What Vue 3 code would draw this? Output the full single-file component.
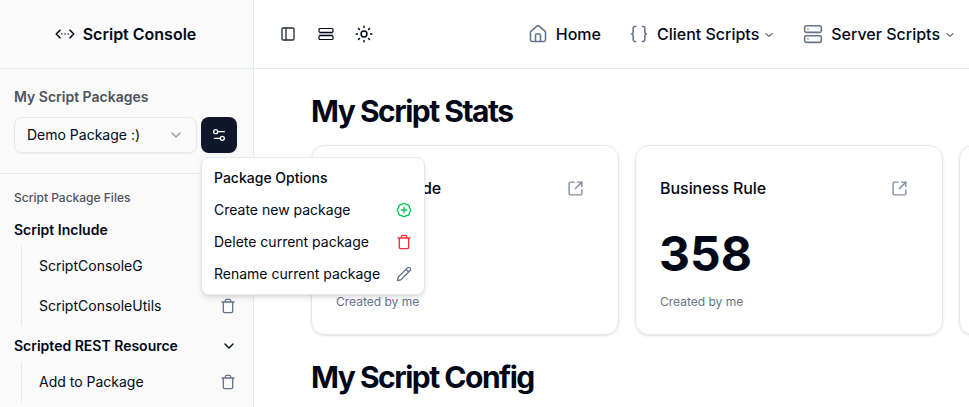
<script setup>
const files = [
  { title: 'Script Include', items: ['ScriptConsoleG', 'ScriptConsoleUtils'] },
  { title: 'Scripted REST Resource', items: ['Add to Package'] },
]
const stats = [
  { title: 'Script Include', value: '', note: 'Created by me' },
  { title: 'Business Rule', value: '358', note: 'Created by me' },
  { title: '', value: '', note: '' },
]
</script>

<template>
  <div class="app">
    <aside class="sidebar">
      <div class="brand">
        <svg class="i20" viewBox="0 0 24 24" stroke-width="2"><path d="m18 7.500 4.500 4.500-4.500 4.500M6 7.500 1.500 12 6 16.500" /><path class="dots" d="M8.200 12h.01M12 12h.01M15.800 12h.01" /></svg>
        <span>Script Console</span>
      </div>
      <section class="packages">
        <h2>My Script Packages</h2>
        <div class="picker">
          <button class="select">
            <span>Demo Package :)</span>
            <svg class="i16 faded" viewBox="0 0 24 24"><path d="m6 9 6 6 6-6" /></svg>
          </button>
          <div class="options">
            <button class="tune">
              <svg class="i16" viewBox="0 0 24 24"><path d="M20 7h-9M14 17H5" /><circle cx="17" cy="17" r="3" /><circle cx="7" cy="7" r="3" /></svg>
            </button>
            <div class="menu">
              <div class="row label">Package Options</div>
              <div class="row">Create new package
                <svg class="i16 green" viewBox="0 0 24 24"><path d="M3.850 8.620a4 4 0 0 1 4.780-4.770 4 4 0 0 1 6.740 0 4 4 0 0 1 4.780 4.780 4 4 0 0 1 0 6.740 4 4 0 0 1-4.770 4.780 4 4 0 0 1-6.750 0 4 4 0 0 1-4.780-4.770 4 4 0 0 1 0-6.760ZM12 8v8M8 12h8" /></svg>
              </div>
              <div class="row">Delete current package
                <svg class="i16 red" viewBox="0 0 24 24"><path d="M3 6h18M19 6v14a2 2 0 0 1-2 2H7a2 2 0 0 1-2-2V6M8 6V4a2 2 0 0 1 2-2h4a2 2 0 0 1 2 2v2" /></svg>
              </div>
              <div class="row">Rename current package
                <svg class="i16 slate" viewBox="0 0 24 24"><path d="M21.174 6.812a1 1 0 0 0-3.986-3.987L3.842 16.174a2 2 0 0 0-.5.830l-1.321 4.352a.5.5 0 0 0 .623.622l4.353-1.320a2 2 0 0 0 .830-.497zM15 5l4 4" /></svg>
              </div>
            </div>
          </div>
        </div>
      </section>
      <section class="files">
        <h3>Script Package Files</h3>
        <div v-for="group in files" :key="group.title" class="group">
          <div class="group-title">{{ group.title }}
            <svg class="i16" viewBox="0 0 24 24"><path d="m6 9 6 6 6-6" /></svg>
          </div>
          <ul>
            <li v-for="item in group.items" :key="item">{{ item }}
              <svg class="i16 slate" viewBox="0 0 24 24"><path d="M3 6h18M19 6v14a2 2 0 0 1-2 2H7a2 2 0 0 1-2-2V6M8 6V4a2 2 0 0 1 2-2h4a2 2 0 0 1 2 2v2" /></svg>
            </li>
          </ul>
        </div>
      </section>
    </aside>

    <div class="page">
      <header>
        <div class="tools">
          <svg class="i16 soft" viewBox="0 0 24 24"><rect x="3" y="3" width="18" height="18" rx="2" /><path d="M9 3v18" /></svg>
          <svg class="i16" viewBox="0 0 16 16" stroke-width="1.200"><path class="band" d="M2 8h12" /><rect x="1" y="2.500" width="14" height="3.800" rx="1" /><rect x="1" y="9.700" width="14" height="3.800" rx="1" /></svg>
          <svg class="i18" viewBox="0 0 24 24"><circle cx="12" cy="12" r="3.900" /><path d="M12 1.600v1.600M12 20.800v1.600M4.700 4.700l1.200 1.200M18.100 18.100l1.200 1.200M1.600 12h1.600M20.800 12h1.600M5.900 18.100l-1.200 1.200M19.300 4.700l-1.200 1.200" /></svg>
        </div>
        <nav>
          <a><svg class="i20 slate" viewBox="0 0 24 24"><path d="M15 21v-8a1 1 0 0 0-1-1h-4a1 1 0 0 0-1 1v8" /><path d="M3 10a2 2 0 0 1 .709-1.528l7-5.999a2 2 0 0 1 2.582 0l7 5.999A2 2 0 0 1 21 10v9a2 2 0 0 1-2 2H5a2 2 0 0 1-2-2z" /></svg>Home</a>
          <a><svg class="i20 slate" viewBox="0 0 24 24"><path d="M8 3H7a2 2 0 0 0-2 2v5a2 2 0 0 1-2 2 2 2 0 0 1 2 2v5c0 1.100.900 2 2 2h1M16 21h1a2 2 0 0 0 2-2v-5c0-1.100.900-2 2-2a2 2 0 0 1-2-2V5a2 2 0 0 0-2-2h-1" /></svg>Client Scripts<svg class="i12" viewBox="0 0 24 24"><path d="m6 9 6 6 6-6" /></svg></a>
          <a><svg class="i20 slate" viewBox="0 0 24 24"><rect x="2" y="2" width="20" height="8" rx="2" /><rect x="2" y="14" width="20" height="8" rx="2" /><path d="M6 6h.01M6 18h.01" /></svg>Server Scripts<svg class="i12" viewBox="0 0 24 24"><path d="m6 9 6 6 6-6" /></svg></a>
        </nav>
      </header>
      <main>
        <h1>My Script Stats</h1>
        <div class="cards">
          <article v-for="(stat, n) in stats" :key="n">
            <div class="card-head">{{ stat.title }}
              <svg class="i17 link" viewBox="0 0 24 24"><path d="M10 3H5a2 2 0 0 0-2 2v14a2 2 0 0 0 2 2h14a2 2 0 0 0 2-2v-5M21 3l-9 9M15 3h6v6" /></svg>
            </div>
            <strong>{{ stat.value }}</strong>
            <small>{{ stat.note }}</small>
          </article>
        </div>
        <h1>My Script Config</h1>
      </main>
    </div>
  </div>
</template>

<style>
body { overflow: hidden; }
</style>

<style scoped>
.app { display: flex; width: 969px; height: 407px; overflow: hidden; background: #fff; color: #020817; font: 14px/20px Inter, sans-serif; }
* { box-sizing: border-box; }
h1, h2, h3, ul { margin: 0; padding: 0; }
button { font: inherit; color: inherit; border: 0; padding: 0; }
svg { fill: none; stroke: currentColor; stroke-linecap: round; stroke-linejoin: round; flex: none; }
svg:not([stroke-width]) { stroke-width: 2; }
.i12 { width: 12px; height: 12px; }
.i16 { width: 16px; height: 16px; }
.i17 { width: 17px; height: 17px; }
.i18 { width: 18px; height: 18px; }
.i20 { width: 20px; height: 20px; }
.slate { color: #64748b; }
.green { color: #00c951; }
.red { color: #fb2c36; }
.faded { opacity: .4; }
.soft { opacity: .85; }
.dots { stroke-width: 1.700; }
.band { opacity: .3; stroke-width: 2; }
.sidebar { width: 254px; flex: none; background: #fafafa; border-right: 1px solid #e2e8f0; }
.brand { height: 69px; border-bottom: 1px solid #e2e8f0; display: flex; align-items: center; justify-content: center; gap: 8px; padding-right: 2px; font-size: 16px; font-weight: 600; }
.packages { height: 105px; padding: 18px 14px 0; border-bottom: 1px solid #e2e8f0; }
h2 { font-size: 14px; line-height: 20px; font-weight: 600; color: #4e535c; }
.picker { display: flex; gap: 4px; margin-top: 10px; }
.select { width: 183px; height: 36px; display: flex; align-items: center; justify-content: space-between; padding: 0 12px; border: 1px solid #e2e8f0; border-radius: 8px; background: transparent; box-shadow: 0 1px 2px rgb(0 0 0 / 5%); }
.options { position: relative; }
.tune { width: 36px; height: 36px; display: grid; place-items: center; border-radius: 8px; background: #0f172a; color: #f8fafc; box-shadow: 0 1px 2px rgb(0 0 0 / 5%); }
.menu { position: absolute; z-index: 2; left: 0; top: 40px; width: 224px; height: 138px; padding: 4px; border: 1px solid #e2e8f0; border-radius: 8px; background: #fff; box-shadow: 0 4px 6px -1px rgb(0 0 0 / 10%), 0 2px 4px -2px rgb(0 0 0 / 10%); }
.row { height: 32px; display: flex; align-items: center; justify-content: space-between; padding: 0 8px; white-space: nowrap; }
.label { font-weight: 500; }
.files { padding: 14px 14px 0; }
h3 { font-size: 12px; line-height: 20px; font-weight: 500; color: #4e535c; }
.group-title { height: 32px; display: flex; align-items: center; justify-content: space-between; padding-right: 2px; font-weight: 600; }
.group:first-of-type { margin-top: 6px; }
.group { margin-bottom: 4px; }
ul { list-style: none; margin-left: 7px; border-left: 1px solid #e2e8f0; padding-left: 17px; }
li { height: 40px; display: flex; align-items: center; justify-content: space-between; padding-right: 3px; }
.page { width: 715px; min-width: 0; }
header { height: 69px; border-bottom: 1px solid #e2e8f0; display: flex; align-items: center; justify-content: space-between; padding: 0 13px 0 26px; }
.tools { display: flex; align-items: center; gap: 22px; }
.tools .i18 { margin-left: -1px; }
nav { display: flex; gap: 28px; }
nav a { display: flex; align-items: center; font-size: 16px; font-weight: 500; white-space: nowrap; }
nav .i20 { margin-right: 8px; stroke-width: 1.900; }
nav .i12 { margin-left: 4px; margin-top: 2px; }
main { padding: 24px 0 0 57px; }
h1 { font-size: 30px; line-height: 36px; font-weight: 700; letter-spacing: -1.500px; white-space: nowrap; }
.cards { display: flex; gap: 16px; margin: 16px 0 24px; }
article { width: 308px; height: 190px; flex: none; padding: 30px 24px 0; border: 1px solid #e2e8f0; border-radius: 14px; box-shadow: 0 1px 3px rgb(0 0 0 / 10%), 0 1px 2px -1px rgb(0 0 0 / 10%); }
.card-head { display: flex; align-items: center; justify-content: space-between; height: 24px; font-size: 16px; font-weight: 500; letter-spacing: -.04px; padding-right: 10px; }
.link { color: #64748b; opacity: .8; }
strong { display: block; height: 48px; margin: 30px 0 0 -1px; font-size: 48px; line-height: 48px; font-weight: 700; }
small { display: block; margin-top: 16px; font-size: 12px; line-height: 16px; color: #64748b; }
</style>
